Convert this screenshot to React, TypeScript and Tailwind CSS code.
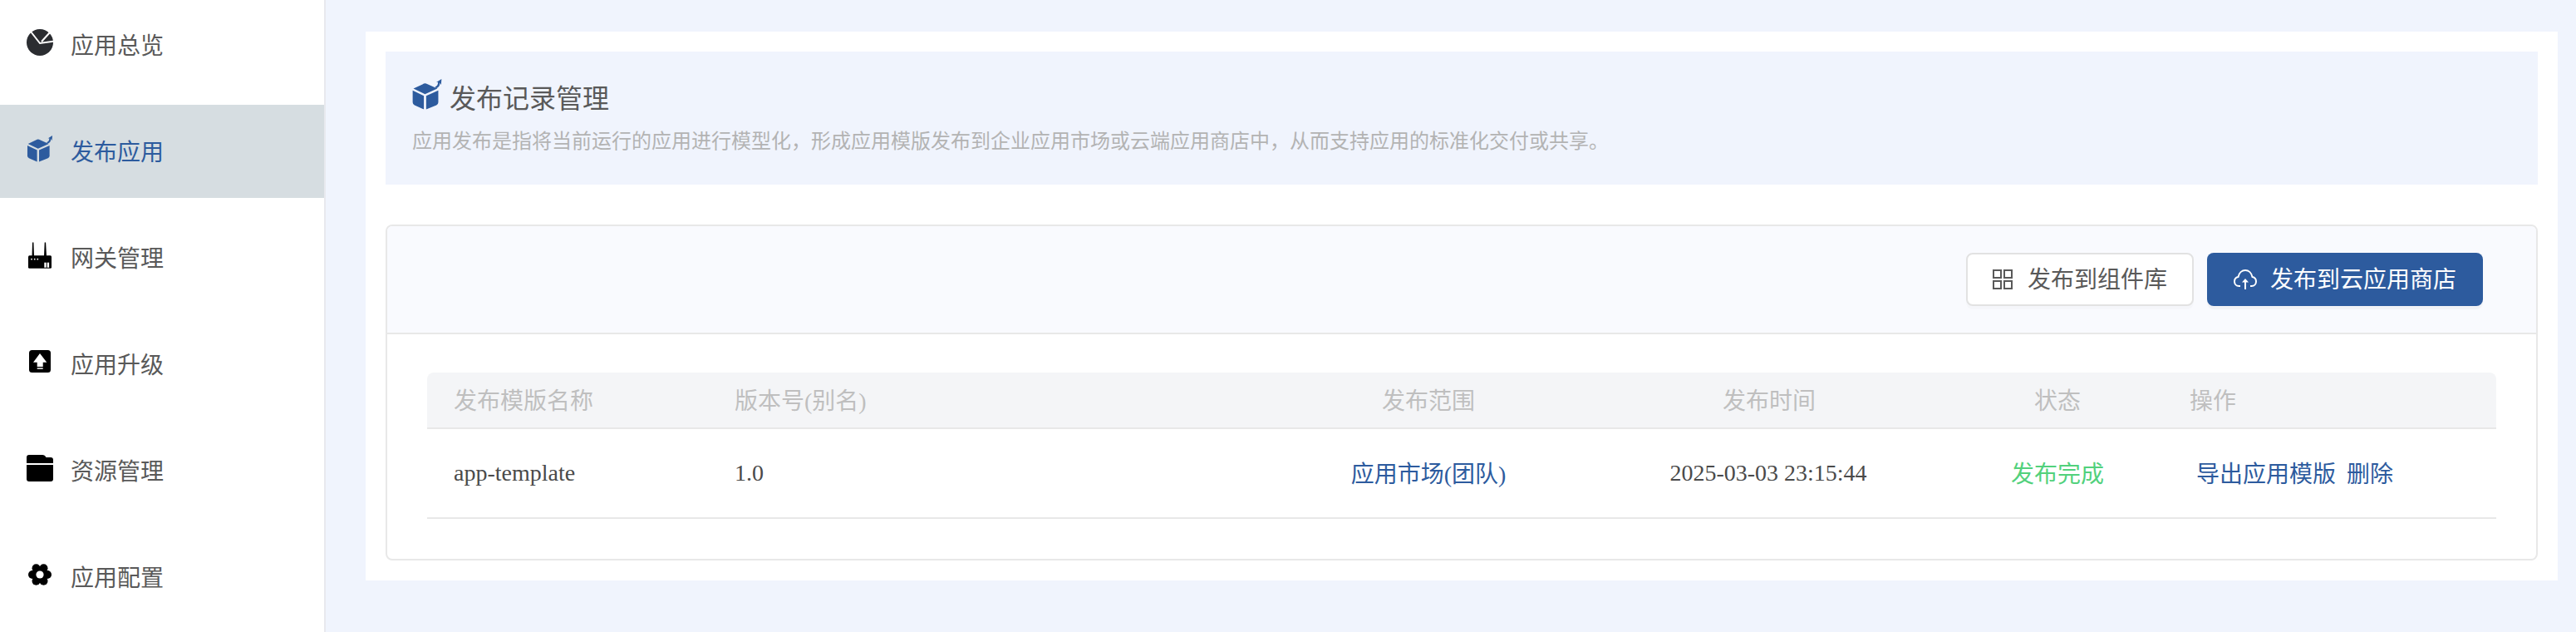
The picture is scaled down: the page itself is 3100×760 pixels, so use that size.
const font = { fontFamily: '"Liberation Serif", "Noto Sans CJK SC", serif' };

const PieIcon = () => (
  <svg viewBox="0 0 32 32" className="w-8 h-8 mb-[6px] shrink-0">
    <circle cx="16" cy="16" r="16" fill="#2b2d31" />
    <path d="M5 3 L16 17 L33 14.5 M18 15 L28 4" fill="none" stroke="#fff" strokeWidth="2" />
  </svg>
);

const CubeIcon = ({ className }: { className: string }) => (
  <svg viewBox="0 0 32 33" className={className} fill="#2d5b9e">
    <path d="M1.3 10.3 L12.5 5 Q13.7 4.4 15 5 L27 10.3 L13.7 16.3 Z" />
    <path d="M.5 12.3 L12.5 18 V32.5 L2.5 28 Q.5 27 .5 25 Z" />
    <path d="M15 18 L28 12.3 V25 Q28 27 26 28 L15 32.5 Z" />
    <path d="M24.5 8.5 Q28 7 27.6 3.4 L25.8 3.6 L31.5 0 L31 6.3 L29.6 4.2 Q30 8.5 25.6 10 Z" />
  </svg>
);

const RouterIcon = () => (
  <svg viewBox="0 0 32 32" className="w-8 h-8 mb-[6px] shrink-0">
    <path d="M7 .5 H8.4 L9 17 H6.5 Z M21.7 .5 H23.1 L24 17 H21 Z" fill="#000" />
    <rect x="2" y="16.3" width="28" height="15.4" rx="1.5" fill="#000" />
    <circle cx="6" cy="20.7" r=".9" fill="#fff" />
    <circle cx="9.7" cy="20.7" r=".9" fill="#fff" />
    <circle cx="13.3" cy="20.7" r=".9" fill="#fff" />
    <rect x="21.3" y="24.7" width="2.4" height="6" fill="#fff" />
    <rect x="24.7" y="24.7" width="2.4" height="6" fill="#fff" />
  </svg>
);

const UpgradeIcon = () => (
  <svg viewBox="0 0 32 32" className="w-8 h-8 mb-[6px] shrink-0">
    <rect x="3" y="2" width="26" height="27" rx="3.5" fill="#000" />
    <path d="M16 6 L24.3 16.7 H19.7 V22 H12.7 V16.7 H8 Z" fill="#fff" />
    <rect x="12.7" y="23.2" width="7" height="1.8" fill="#ccc" />
  </svg>
);

const FolderIcon = () => (
  <svg viewBox="0 0 32 32" className="w-8 h-8 mb-[6px] shrink-0" fill="#000">
    <path d="M0 10 V3 A3 3 0 0 1 3 0 H19 Q22 0 23.5 3 H29 A3 3 0 0 1 32 6 V10 Z" />
    <path d="M0 12 H32 V29 A3 3 0 0 1 29 32 H3 A3 3 0 0 1 0 29 Z" />
  </svg>
);

const GearIcon = () => (
  <svg viewBox="0 0 32 32" className="w-8 h-8 mb-[6px] shrink-0" fill="#000">
    <circle cx="16" cy="16" r="9.5" />
    <circle cx="25" cy="16" r="5" />
    <circle cx="7" cy="16" r="5" />
    <circle cx="20.5" cy="8.2" r="5" />
    <circle cx="11.5" cy="8.2" r="5" />
    <circle cx="20.5" cy="23.8" r="5" />
    <circle cx="11.5" cy="23.8" r="5" />
    <circle cx="16" cy="16" r="4.6" fill="#fff" />
  </svg>
);

const GridIcon = () => (
  <svg viewBox="0 0 24 24" className="w-6 h-6 shrink-0" fill="none" stroke="#595959" strokeWidth="2">
    <rect x="1" y="1" width="9" height="9" />
    <rect x="14" y="1" width="9" height="9" />
    <rect x="1" y="14" width="9" height="9" />
    <rect x="14" y="14" width="9" height="9" />
  </svg>
);

const CloudIcon = () => (
  <svg viewBox="0 0 28 24" className="w-7 h-6 shrink-0" fill="none" stroke="#fff" strokeWidth="2">
    <path d="M8 20 H6.5 C3 20 1 17.5 1 14.5 C1 11.5 3 9.5 5.5 9 C6.5 4 10 1 14 1 C18 1 21.5 4 22.5 9 C25 9.5 27 11.5 27 14.5 C27 17.5 25 20 21.5 20 H20" />
    <path d="M14 24 V12" />
    <path d="M10 15.5 L14 11 L18 15.5 Z" fill="#fff" stroke="none" />
  </svg>
);

const menu = [
  { label: "应用总览", icon: <PieIcon /> },
  { label: "发布应用", icon: <CubeIcon className="w-8 h-8 mb-[6px] shrink-0" />, active: true },
  { label: "网关管理", icon: <RouterIcon /> },
  { label: "应用升级", icon: <UpgradeIcon /> },
  { label: "资源管理", icon: <FolderIcon /> },
  { label: "应用配置", icon: <GearIcon /> },
];

const Sidebar = () => (
  <div className="w-[392px] shrink-0 h-full bg-white border-r-2 border-[#e8e9ee] overflow-hidden">
    <div className="flex flex-col gap-4 -mt-[2px]">
      {menu.map((item) => (
        <div
          key={item.label}
          className={
            item.active
              ? "h-[112px] flex items-center gap-[21px] pl-8 bg-[#d6dde1] text-[#2d5b9e]"
              : "h-[112px] flex items-center gap-[21px] pl-8 text-[#595959]"
          }
        >
          {item.icon}
          <span className="text-[28px] pt-1">{item.label}</span>
        </div>
      ))}
    </div>
  </div>
);

const ReleaseTable = () => (
  <table className="w-full table-fixed border-separate border-spacing-0 text-[28px]">
    <colgroup>
      <col className="w-[338px]" />
      <col className="w-[675px]" />
      <col className="w-[382px]" />
      <col className="w-[438px]" />
      <col className="w-[258px]" />
      <col className="w-[399px]" />
    </colgroup>
    <thead>
      <tr className="text-[#bfbfbf]">
        <th className="h-[68px] pl-8 pt-[3px] text-left font-normal bg-[#f4f5f7] border-b-2 border-[#e8e8e8] rounded-tl-lg">发布模版名称</th>
        <th className="pl-8 pt-[3px] text-left font-normal bg-[#f4f5f7] border-b-2 border-[#e8e8e8]">版本号(别名)</th>
        <th className="pl-[2px] pt-[3px] text-center font-normal bg-[#f4f5f7] border-b-2 border-[#e8e8e8]">发布范围</th>
        <th className="pl-[2px] pt-[3px] text-center font-normal bg-[#f4f5f7] border-b-2 border-[#e8e8e8]">发布时间</th>
        <th className="pt-[3px] text-center font-normal bg-[#f4f5f7] border-b-2 border-[#e8e8e8]">状态</th>
        <th className="pl-[30px] pt-[3px] text-left font-normal bg-[#f4f5f7] border-b-2 border-[#e8e8e8] rounded-tr-lg">操作</th>
      </tr>
    </thead>
    <tbody>
      <tr className="text-[#4a4a4a]">
        <td className="h-[108px] pl-8 border-b-2 border-[#e8e8e8]">app-template</td>
        <td className="pl-8 border-b-2 border-[#e8e8e8]">1.0</td>
        <td className="pl-[2px] pt-[3px] text-center text-[#2d5b9e] border-b-2 border-[#e8e8e8]">应用市场(团队)</td>
        <td className="text-center border-b-2 border-[#e8e8e8]">2025-03-03 23:15:44</td>
        <td className="pt-[3px] text-center text-[#52d17c] border-b-2 border-[#e8e8e8]">发布完成</td>
        <td className="pl-[38px] pt-[3px] text-[#2d5b9e] border-b-2 border-[#e8e8e8]">
          <div className="flex gap-[13px]">
            <span>导出应用模版</span>
            <span>删除</span>
          </div>
        </td>
      </tr>
    </tbody>
  </table>
);

export default function App() {
  return (
    <div className="w-[3100px] h-[760px] flex bg-[#f0f4fd] overflow-hidden" style={font}>
      <Sidebar />
      <div className="flex-1 pl-12 pr-[22px] pt-[38px]">
        <div className="h-[660px] bg-white p-6">
          <div className="h-40 bg-[#f0f4fd] pl-8 pt-8">
            <div className="flex items-center gap-[9px] h-11">
              <CubeIcon className="w-9 h-[37px] shrink-0 mb-[6px]" />
              <span className="text-[32px] leading-[44px] pt-[5px] text-[#595959]">发布记录管理</span>
            </div>
            <p className="mt-[10px] text-2xl leading-[44px] text-[#b3b3b3]">
              应用发布是指将当前运行的应用进行模型化，形成应用模版发布到企业应用市场或云端应用商店中，从而支持应用的标准化交付或共享。
            </p>
          </div>
          <div className="mt-12 h-[404px] border-2 border-[#e8e8e8] rounded-lg overflow-hidden">
            <div className="h-[130px] flex items-center justify-end gap-4 pr-16 bg-[#f9fafe] border-b-2 border-[#e8e8e8]">
              <button className="h-16 flex items-center gap-[18px] px-[30px] bg-white border-2 border-[#e2e2e2] rounded-lg text-[28px] text-[#595959] shadow-[0_4px_0_rgba(0,0,0,0.015)]">
                <GridIcon />
                <span className="pt-[2px]">发布到组件库</span>
              </button>
              <button className="h-16 flex items-center gap-4 px-8 bg-[#2d5b9e] rounded-lg text-[28px] text-white shadow-[0_4px_0_rgba(0,0,0,0.03)]">
                <CloudIcon />
                <span className="pt-[2px]">发布到云应用商店</span>
              </button>
            </div>
            <div className="px-12 pt-[46px]">
              <ReleaseTable />
            </div>
          </div>
        </div>
      </div>
    </div>
  );
}
